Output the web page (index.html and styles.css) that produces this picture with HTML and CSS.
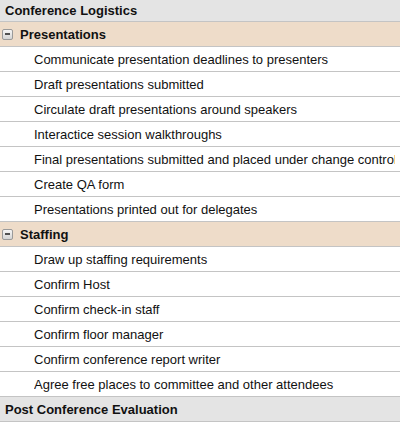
FILE: index.html
```html
<!DOCTYPE html>
<html>
<head>
<meta charset="utf-8">
<link rel="stylesheet" href="styles.css">
</head>
<body>
<div class="grid">
  <div class="row top"><span class="txt">Conference Logistics</span></div>
  <div class="row group"><span class="toggle"><span class="bar"></span></span><span class="txt">Presentations</span></div>
  <div class="row item"><span class="txt">Communicate presentation deadlines to presenters</span></div>
  <div class="row item"><span class="txt">Draft presentations submitted</span></div>
  <div class="row item"><span class="txt">Circulate draft presentations around speakers</span></div>
  <div class="row item"><span class="txt">Interactice session walkthroughs</span></div>
  <div class="row item"><span class="txt">Final presentations submitted and placed under change control</span></div>
  <div class="row item"><span class="txt">Create QA form</span></div>
  <div class="row item"><span class="txt">Presentations printed out for delegates</span></div>
  <div class="row group"><span class="toggle"><span class="bar"></span></span><span class="txt">Staffing</span></div>
  <div class="row item"><span class="txt">Draw up staffing requirements</span></div>
  <div class="row item"><span class="txt">Confirm Host</span></div>
  <div class="row item"><span class="txt">Confirm check-in staff</span></div>
  <div class="row item"><span class="txt">Confirm floor manager</span></div>
  <div class="row item"><span class="txt">Confirm conference report writer</span></div>
  <div class="row item"><span class="txt">Agree free places to committee and other attendees</span></div>
  <div class="row post"><span class="txt">Post Conference Evaluation</span></div>
</div>
</body>
</html>
```
FILE: styles.css
```css
html, body {
  margin: 0;
  padding: 0;
  background: #fff;
}
.grid {
  width: 400px;
  font-family: "Liberation Sans", Arial, sans-serif;
  font-size: 13px;
  color: #111;
  overflow: hidden;
}
.row {
  display: flex;
  align-items: center;
  height: 24px;
  border-bottom: 1px solid #c4c4c4;
  white-space: nowrap;
  overflow: hidden;
}
.txt {
  display: block;
  flex: 1;
  min-width: 0;
  overflow: hidden;
  margin-right: 5px;
}
.top {
  height: 21px;
  background: #e4e4e4;
  font-weight: bold;
  padding-left: 5px;
}
.group {
  background: #eedcc9;
  font-weight: bold;
  padding-left: 2px;
}
.toggle {
  flex: none;
  width: 9px;
  height: 9px;
  border: 1px solid #9a9a9a;
  border-radius: 2px;
  background: linear-gradient(#f6f6f6, #d4d4d4);
  margin-right: 7px;
  display: flex;
  align-items: center;
  justify-content: center;
}
.bar {
  width: 5px;
  height: 2px;
  background: #505050;
}
.item {
  padding-left: 34px;
  background: #fff;
}
.post {
  background: #e4e4e4;
  font-weight: bold;
  padding-left: 5px;
}
```
